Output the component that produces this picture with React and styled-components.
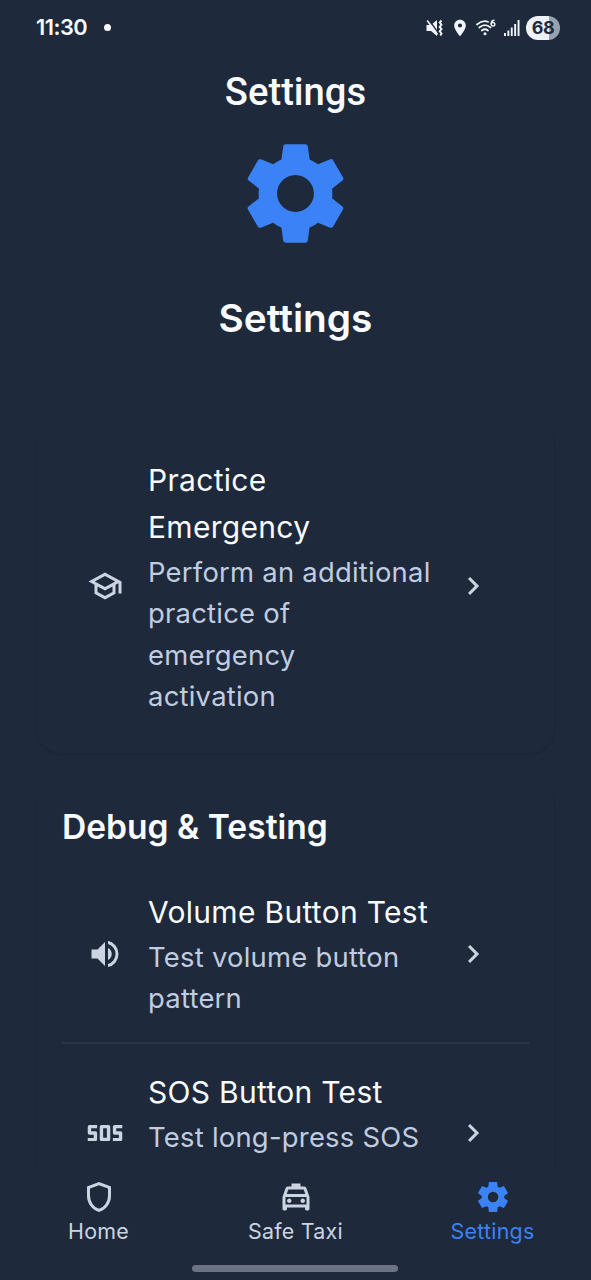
import React from "react";
import styled, { createGlobalStyle } from "styled-components";
import { MdSettings, MdLocationOn } from "react-icons/md";

const Global = createGlobalStyle`
  * { box-sizing: border-box; }
  body { margin: 0; background: #1e293b; font-family: Inter, Roboto, sans-serif; color: #f8fafc; }
`;

const Screen = styled.div`
  width: 591px;
  height: 1280px;
  overflow: hidden;
  display: flex;
  flex-direction: column;
  background: #1e293b;
`;

const StatusBar = styled.header`
  flex: none;
  height: 56px;
  padding: 0 31px 1px 36px;
  display: flex;
  align-items: center;
  justify-content: space-between;
`;

const Clock = styled.div`
  display: flex;
  align-items: center;
  gap: 17px;
  font: 600 21.8px/1 Inter, sans-serif;
  letter-spacing: -0.5px;
`;

const Dot = styled.span`
  width: 7px;
  height: 7px;
  border-radius: 50%;
  background: #f8fafc;
`;

const StatusIcons = styled.div`
  display: flex;
  align-items: center;
  gap: 6px;
  color: #f1f5f9;
  svg { display: block; }
`;

const Battery = styled.div`
  width: 34px;
  height: 24px;
  border-radius: 12px;
  display: grid;
  place-items: center;
  background: linear-gradient(90deg, #eef2f8 0 68%, #99a1af 68%);
  color: #1e293b;
  font: 700 18px/1 Inter, sans-serif;
  letter-spacing: -0.5px;
`;

const AppTitle = styled.h1`
  flex: none;
  margin: 0;
  height: 72px;
  text-align: center;
  font: 500 38.2px/72px Roboto, sans-serif;
`;

const Content = styled.main`
  flex: none;
  height: 1040px;
  overflow: hidden;
  display: flex;
  flex-direction: column;
`;

const Hero = styled.section`
  flex: none;
  height: 290px;
  padding-top: 4px;
  display: flex;
  flex-direction: column;
  align-items: center;
  gap: 35px;
  svg { color: #3b82f6; display: block; }
`;

const HeroTitle = styled.h2`
  margin: 0;
  font: 600 38.8px/56px Inter, sans-serif;
`;

const Card = styled.section`
  flex: none;
  margin: 0 37px 25px;
  padding: ${(p) => p.$pad};
  border-radius: 24px;
  box-shadow: 0 1px 2px rgba(10, 18, 36, 0.2);
`;

const CardTitle = styled.h3`
  margin: 0 0 37px;
  font: 600 33.6px/50px Inter, sans-serif;
`;

const Row = styled.div`
  display: grid;
  grid-template-columns: 86px minmax(0, 1fr) 110px;
  align-items: center;
  padding-bottom: ${(p) => p.$bottom || 0}px;
  margin-bottom: ${(p) => (p.$divided ? 25 : 0)}px;
  border-bottom: ${(p) => (p.$divided ? "2px solid #2c384a" : "none")};
`;

const RowIcon = styled.span`
  display: flex;
  justify-content: center;
  padding-bottom: 2px;
  color: #cbd5e1;
`;

const RowTitle = styled.div`
  white-space: pre;
  font: 400 30px/47.5px Inter, sans-serif;
  letter-spacing: 0.3px;
`;

const RowText = styled.div`
  white-space: pre;
  color: #c0cce0;
  font: 400 27.4px/41.6px Inter, sans-serif;
  letter-spacing: 0.25px;
`;

const TabBar = styled.nav`
  flex: none;
  height: 84px;
  padding-top: 11px;
  display: grid;
  grid-template-columns: repeat(3, 197px);
`;

const Tab = styled.a`
  display: flex;
  flex-direction: column;
  align-items: center;
  color: ${(p) => (p.$active ? "#3b82f6" : "#cbd5e1")};
  font: 400 21.4px/32px Inter, sans-serif;
  letter-spacing: 0.25px;
`;

const HomeIndicator = styled.div`
  flex: none;
  align-self: center;
  width: 206px;
  height: 7px;
  margin: 13px 1px 0 0;
  border-radius: 4px;
  background: #6b7484;
`;

const Symbol = ({ d, size = 36 }) => (
  <svg width={size} height={size} viewBox="0 -960 960 960" fill="currentColor">
    <path d={d} />
  </svg>
);

const paths = {
  school: "M480-120 200-272v-240L40-600l440-240 440 240v320h-80v-276l-80 44v240L480-120Zm0-332 274-148-274-148-274 148 274 148Zm0 241 200-108v-151L480-360 280-470v151l200 108Z",
  volume: "M560-131v-82q90-26 145-100t55-168q0-94-55-168T560-749v-82q124 28 202 125.500T840-481q0 127-78 224.500T560-131ZM120-360v-240h160l200-200v640L280-360H120Zm440 40v-322q47 22 73.500 66t26.500 96q0 51-26.500 94.500T560-320Z",
  sos: "M385-265q-45 0-45-45v-340q0-45 45-45h190q45 0 45 45v340q0 45-45 45H385Zm45-90h100v-250H430v250ZM20-265v-85h160v-85H65q-45 0-45-45v-170q0-45 45-45h205v85H110v85h115q45 0 45 45v170q0 45-45 45H20Zm670 0v-85h160v-85H735q-45 0-45-45v-170q0-45 45-45h205v85H780v85h115q45 0 45 45v170q0 45-45 45H690Z",
  chevron: "M504-480 320-664l56-56 240 240-240 240-56-56 184-184Z",
  shield: "M480-80q-139-35-229.500-159.500T160-516v-244l320-120 320 120v244q0 152-90.500 276.500T480-80Zm0-84q104-33 172-132t68-220v-189l-240-90-240 90v189q0 121 68 220t172 132Z",
  taxi: "M240-200v40q0 17-11.500 28.500T200-120h-40q-17 0-28.500-11.500T120-160v-320l84-240q6-18 21.500-29t34.500-11h100v-80h240v80h100q19 0 34.500 11t21.500 29l84 240v320q0 17-11.500 28.500T800-120h-40q-17 0-28.500-11.500T720-160v-40H240Zm-8-360h496l-42-120H274l-42 120Zm68 240q25 0 42.500-17.500T360-380q0-25-17.500-42.500T300-440q-25 0-42.500 17.500T240-380q0 25 17.500 42.500T300-320Zm360 0q25 0 42.500-17.500T720-380q0-25-17.500-42.500T660-440q-25 0-42.500 17.500T600-380q0 25 17.500 42.500T660-320ZM200-280h560v-200H200v200Z",
  settings: "m370-80-16-128q-13-5-24.500-12T307-235l-119 50L78-375l103-78q-1-7-1-13.500v-27q0-6.500 1-13.500L78-585l110-190 119 50q11-8 23-15t24-12l16-128h220l16 128q13 5 24.500 12t22.500 15l119-50 110 190-103 78q1 7 1 13.500v27q0 6.500-2 13.500l103 78-110 190-118-50q-11 8-23 15t-24 12L590-80H370Zm112-260q58 0 99-41t41-99q0-58-41-99t-99-41q-59 0-99.500 41T342-480q0 58 40.500 99t99.500 41Z",
};

const Mute = () => (
  <svg width="18" height="18" viewBox="0 0 18 18" fill="none" stroke="currentColor">
    <path d="M.5 6h4.500L11 1v16l-6-5H.5Z" fill="currentColor" stroke="none" />
    <path d="M3 1l9 12.500" stroke="#1e293b" strokeWidth="1.300" />
    <path d="M1.200 1.500l10.300 14" strokeWidth="1.600" />
    <path d="M15.500 1.500l-1.800 2 1.800 2.200-1.800 2.200 1.800 2.200-1.800 2.200 1.800 2.200-1.200 2" strokeWidth="1.900" />
  </svg>
);

const Wifi = () => (
  <svg width="22" height="18" viewBox="0 0 22 18" fill="none" stroke="currentColor" strokeWidth="1.700" strokeLinecap="round">
    <path d="M1 5.500Q6.500 .5 12 2.800M3.300 8.500Q9 3.800 14.500 8.500M5.800 11.500Q9 9 12 11.500" />
    <circle cx="9" cy="14.800" r="1.500" fill="currentColor" stroke="none" />
    <path d="M18 1.200Q15 1.500 15.200 5" strokeWidth="1.400" />
    <circle cx="17" cy="5.300" r="1.800" strokeWidth="1.400" />
  </svg>
);

const Signal = () => (
  <svg width="16" height="18" viewBox="0 0 16 18" fill="currentColor">
    <path d="M0 14h1.900v3H0ZM3.400 11.500h1.900V17H3.400ZM6.800 8.500h1.900V17H6.800ZM10.200 5h1.900v12h-1.900ZM13.600 1h1.900v16h-1.900Z" />
  </svg>
);

const Item = ({ icon, title, text, ...rest }) => (
  <Row {...rest}>
    <RowIcon><Symbol d={paths[icon]} /></RowIcon>
    <div>
      <RowTitle>{title}</RowTitle>
      <RowText>{text}</RowText>
    </div>
    <RowIcon><Symbol d={paths.chevron} /></RowIcon>
  </Row>
);

export default function App() {
  return (
    <Screen>
      <Global />
      <StatusBar>
        <Clock>11:30<Dot /></Clock>
        <StatusIcons>
          <Mute />
          <MdLocationOn size={20} />
          <Wifi />
          <Signal />
          <Battery>68</Battery>
        </StatusIcons>
      </StatusBar>
      <AppTitle>Settings</AppTitle>
      <Content>
        <Hero>
          <MdSettings size={123} />
          <HeroTitle>Settings</HeroTitle>
        </Hero>
        <Card $pad="38.500px 25px 35.500px">
          <Item icon="school" title={"Practice\nEmergency"} text={"Perform an additional\npractice of\nemergency\nactivation"} />
        </Card>
        <Card $pad="24px 25px">
          <CardTitle>Debug &amp; Testing</CardTitle>
          <Item icon="volume" title="Volume Button Test" text={"Test volume button\npattern"} $divided $bottom={22} />
          <Item icon="sos" title="SOS Button Test" text={"Test long-press SOS\nbutton"} />
        </Card>
      </Content>
      <TabBar>
        <Tab><Symbol d={paths.shield} />Home</Tab>
        <Tab><Symbol d={paths.taxi} />Safe Taxi</Tab>
        <Tab $active><Symbol d={paths.settings} />Settings</Tab>
      </TabBar>
      <HomeIndicator />
    </Screen>
  );
}
